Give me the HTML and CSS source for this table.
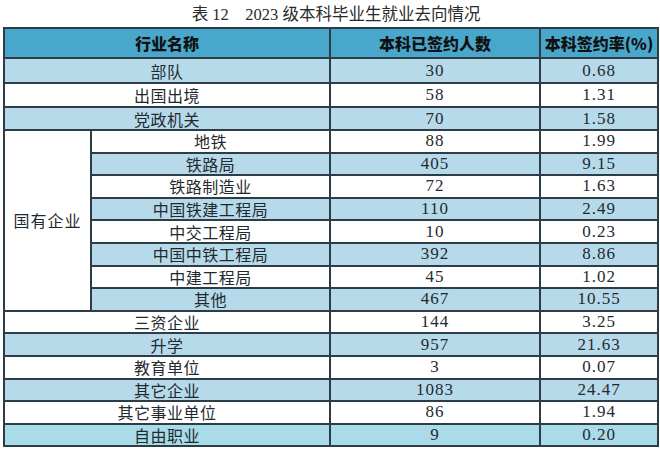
FILE: index.html
```html
<!DOCTYPE html>
<html lang="zh-CN">
<head>
<meta charset="utf-8">
<title>2023 级本科毕业生就业去向情况</title>
<link rel="stylesheet" href="styles.css">
</head>
<body>
<div class="caption">表 12　2023 级本科毕业生就业去向情况</div>
<table class="grid">
  <colgroup>
    <col class="c-a"><col class="c-b"><col class="c-c"><col class="c-d">
  </colgroup>
  <thead>
    <tr class="head">
      <th colspan="2">行业名称</th>
      <th>本科已签约人数</th>
      <th>本科签约率(%)</th>
    </tr>
  </thead>
  <tbody>
    <tr class="blue r1"><td colspan="2">部队</td><td class="num">30</td><td class="num">0.68</td></tr>
    <tr class="white r2"><td colspan="2">出国出境</td><td class="num">58</td><td class="num">1.31</td></tr>
    <tr class="blue r3"><td colspan="2">党政机关</td><td class="num">70</td><td class="num">1.58</td></tr>
    <tr class="white"><td rowspan="8" class="group">国有企业</td><td>地铁</td><td class="num">88</td><td class="num">1.99</td></tr>
    <tr class="blue"><td>铁路局</td><td class="num">405</td><td class="num">9.15</td></tr>
    <tr class="white"><td>铁路制造业</td><td class="num">72</td><td class="num">1.63</td></tr>
    <tr class="blue"><td>中国铁建工程局</td><td class="num">110</td><td class="num">2.49</td></tr>
    <tr class="white"><td>中交工程局</td><td class="num">10</td><td class="num">0.23</td></tr>
    <tr class="blue"><td>中国中铁工程局</td><td class="num">392</td><td class="num">8.86</td></tr>
    <tr class="white"><td>中建工程局</td><td class="num">45</td><td class="num">1.02</td></tr>
    <tr class="blue"><td>其他</td><td class="num">467</td><td class="num">10.55</td></tr>
    <tr class="white"><td colspan="2">三资企业</td><td class="num">144</td><td class="num">3.25</td></tr>
    <tr class="blue"><td colspan="2">升学</td><td class="num">957</td><td class="num">21.63</td></tr>
    <tr class="white"><td colspan="2">教育单位</td><td class="num">3</td><td class="num">0.07</td></tr>
    <tr class="blue"><td colspan="2">其它企业</td><td class="num">1083</td><td class="num">24.47</td></tr>
    <tr class="white"><td colspan="2">其它事业单位</td><td class="num">86</td><td class="num">1.94</td></tr>
    <tr class="cyan"><td colspan="2">自由职业</td><td class="num">9</td><td class="num">0.20</td></tr>
  </tbody>
</table>
</body>
</html>
```
FILE: styles.css
```css
html, body {
  margin: 0;
  padding: 0;
  background: #ffffff;
}

body {
  width: 660px;
  height: 452px;
  overflow: hidden;
  font-family: "Liberation Serif", "Noto Sans CJK SC", serif;
  color: #1e1e1e;
}

.caption {
  height: 27px;
  line-height: 30px;
  text-align: center;
  font-size: 16.5px;
  padding-left: 12px;
  color: #2a2a2a;
  box-sizing: border-box;
}

.grid {
  margin-left: 3px;
  width: 654px;
  border-collapse: collapse;
  table-layout: fixed;
}

.c-a { width: 87px; }
.c-b { width: 239px; }
.c-c { width: 210px; }
.c-d { width: 118px; }

.grid th,
.grid td {
  border: 2px solid #2d3d48;
  padding: 0;
  text-align: center;
  vertical-align: middle;
  font-size: 16px;
  line-height: 16px;
  letter-spacing: 0.5px;
  white-space: nowrap;
}

.head {
  height: 30px;
  background: #4aa7cc;
}

.head th {
  font-family: "Noto Sans CJK SC", sans-serif;
  font-weight: 900;
  color: #111111;
  letter-spacing: 0;
}

.grid tbody tr {
  height: 22.6px;
}

.grid tbody tr.r1 { height: 25px; }
.grid tbody tr.r2 { height: 24px; }
.grid tbody tr.r3 { height: 23px; }

.grid td {
  font-family: "Noto Sans CJK SC", sans-serif;
  font-weight: 400;
  color: #1f2a30;
}

.grid td.num {
  font-family: "Liberation Serif", serif;
  font-size: 17px;
  letter-spacing: 1px;
}

.blue { background: #b7daea; }
.white { background: #ffffff; }
.cyan { background: #a9dbe8; }

.grid td.group {
  background: #ffffff;
  letter-spacing: 1px;
}
```
